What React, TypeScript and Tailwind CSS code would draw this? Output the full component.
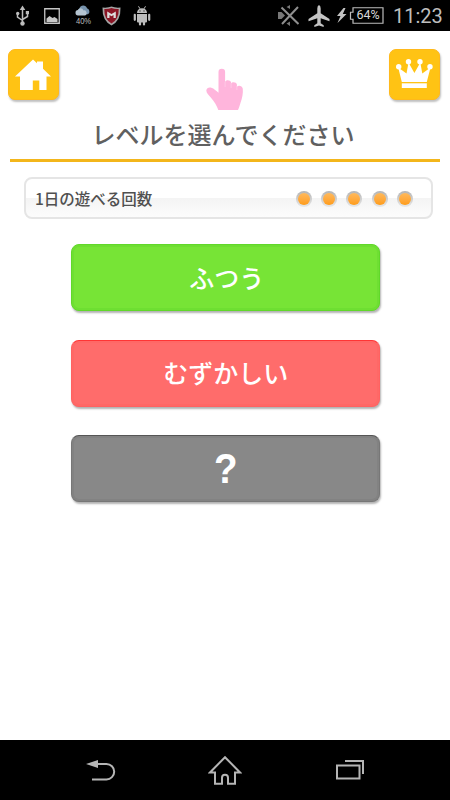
import React from 'react';

const jp = "font-['Noto_Sans_CJK_JP',sans-serif]";

function StatusBar() {
  return (
    <header className="flex h-[31px] shrink-0 items-start bg-black text-[#c4c4c4]">
      <svg className="ml-[15px] mt-[5px] h-[22px] w-[15px] shrink-0" viewBox="0 0 15 22" fill="none" stroke="#bdbdbd" strokeWidth="1.5">
        <path d="M7.5 4v14M2.5 9.5v2.5l5 3.5M12.500 8v3.500l-5 3" />
        <path d="M7.500 0.500l2.800 4.500h-5.600z" fill="#bdbdbd" stroke="none" />
        <circle cx="7.500" cy="18.500" r="2.200" fill="#bdbdbd" stroke="none" />
        <circle cx="2.700" cy="8.500" r="1.700" fill="#bdbdbd" stroke="none" />
        <path d="M10.800 6h3.200v3.200h-3.200z" fill="#bdbdbd" stroke="none" />
      </svg>
      <svg className="ml-[14px] mt-[8px] h-4 w-4 shrink-0" viewBox="0 0 16 16" fill="none">
        <path d="M.75.75h14.500v14.500H.750z" stroke="#c6c6c6" strokeWidth="1.300" />
        <path d="M2.500 14v-3.500l3-2.500 3 2 2-1 3 2v3z" fill="#c6c6c6" />
      </svg>
      <div className="ml-[14px] mt-[5px] flex w-[18px] shrink-0 flex-col items-center">
        <svg className="h-[11px] w-[16px]" viewBox="0 0 16 10" preserveAspectRatio="none">
          <path d="M5 8.500a3 3 0 0 1-.500-5.500A4 4 0 0 1 12 3a3 3 0 0 1 1 5.500z" fill="#7793ad" />
          <path d="M3 9.500a2.500 2.500 0 0 1 0-5 3 3 0 0 1 5.500.500A2.300 2.300 0 0 1 10 9.500z" fill="#b5c4d0" />
        </svg>
        <span className="scale-x-80 font-['Liberation_Sans',sans-serif] text-[9.500px] leading-[9px] text-[#bbb]">40%</span>
      </div>
      <svg className="ml-[10px] mt-[6px] h-[20px] w-[19px] shrink-0" viewBox="0 0 19 20">
        <path d="M.500 1.500Q6 2 9.500.500q3.500 1.500 9 1Q19 14.500 9.500 19.500 0 14.500.500 1.500z" fill="#a5a5a5" />
        <path d="M2.300 3q4 .300 7.200-1 3.200 1.300 7.200 1Q17 13.200 9.500 17.500 2 13.200 2.300 3z" fill="#8b1525" />
        <path d="M5.200 12V5.500l4.300 2.400 4.300-2.400V12h-2.300V9l-2 1.200-2-1.200v3z" fill="#ddd" />
      </svg>
      <svg className="ml-[12px] mt-[5px] h-[22px] w-[18px] shrink-0" viewBox="0 0 18 22" fill="#bdbdbd">
        <path d="M4 8a5 4.800 0 0 1 10 0zM4 9h10v7.500a1 1 0 0 1-1 1H5a1 1 0 0 1-1-1z" />
        <path d="M5.500 1.300l1.500 2.500M12.500 1.300l-1.500 2.500" stroke="#bdbdbd" strokeWidth="1" />
        <path d="M1.800 9.800v5M16.200 9.800v5M7 16.500v3M11 16.500v3" stroke="#bdbdbd" strokeWidth="2.200" strokeLinecap="round" />
        <path d="M6.500 5.500h1v1h-1zM10.500 5.500h1v1h-1z" fill="#000" />
      </svg>
      <svg className="ml-[126px] mt-[5px] h-[21px] w-[22px] shrink-0" viewBox="0 0 22 21">
        <path d="M1 7h3.500l3.500 3.500L4.500 14H1z" fill="#777" />
        <path d="M9.500 2L13 0v4zM9.500 18.500l3.500-2v4.500z" fill="#777" />
        <path d="M4.500 2.500l17 16.500M21 2L5 19" stroke="#8f8f8f" strokeWidth="2" />
      </svg>
      <svg className="ml-[9px] mt-[5px] h-[22px] w-[22px] shrink-0" viewBox="0 0 22 22" fill="#c4c4c4">
        <path d="M11 0q1.700.800 1.700 3.500v4.800L21.500 14v2.300l-8.800-3v5l3 2V22L11 20.600 6.300 22v-1.700l3-2v-5l-8.800 3V14l8.800-5.700V3.500Q9.300.800 11 0z" />
      </svg>
      <svg className="ml-[6px] mt-[8px] h-[15px] w-[11px] shrink-0" viewBox="0 0 11 15" fill="#c4c4c4">
        <path d="M7.500 0L1 8h3.500L1.500 15 10.500 6H6.800L9.500 0z" />
      </svg>
      <div className="relative ml-[2px] mt-[7px] flex h-[17px] w-[35px] shrink-0 items-center justify-center pl-[3px]">
        <svg className="absolute inset-0 h-full w-full" viewBox="0 0 35 17" fill="none">
          <path d="M4 .750h30v15.500H4v-4H1.500v-7H4z" stroke="#bdbdbd" strokeWidth="1.200" />
        </svg>
        <span className="font-[Roboto,sans-serif] text-[12.500px] leading-none text-[#d8d8d8]">64%</span>
      </div>
      <span className="ml-[9px] mt-[5px] whitespace-nowrap font-[Roboto,sans-serif] text-[20px] leading-[23px] text-[#bebebe]">11:23</span>
    </header>
  );
}

const tile = 'flex h-[51px] w-[51px] items-center justify-center rounded-[7px] border border-[#ffb91b] bg-[#ffc314] shadow-[1px_2px_2px_rgba(0,0,0,0.25)]';

function HomeButton() {
  return (
    <button className={tile} aria-label="ホーム">
      <svg className="h-[51px] w-[51px] shrink-0" viewBox="0 0 51 51" fill="#fff">
        <path d="M7 27.500L25 10.500l4 3.800v-1.800h6v7.300l8 7.700h-4.500v13.500h-7.200v-9.500h-6.500v9.500H12V27.500z" />
      </svg>
    </button>
  );
}

function CrownButton() {
  return (
    <button className={tile} aria-label="ランキング">
      <svg className="h-[51px] w-[51px] shrink-0" viewBox="0 0 51 51" fill="#fff">
        <circle cx="9.700" cy="17.700" r="2.700" />
        <circle cx="19.500" cy="12.700" r="2.700" />
        <circle cx="31" cy="12.700" r="2.700" />
        <circle cx="41" cy="17.700" r="2.700" />
        <path d="M9.200 18.500l8.300 6 2-11 5.900 10.500L31.300 13.500l2 11 8.200-6-3.700 14.500h-25z" />
        <path d="M12.800 34.300h25V39h-25z" />
      </svg>
    </button>
  );
}

function Pointer() {
  return (
    <svg className="ml-[2px] mt-[19px] h-[43px] w-[38px]" viewBox="0 0 38 43" fill="#ffb5dc">
      <path d="M12.500 4a3.300 3.300 0 0 1 6.600 0v10.200c.500-2.600 5.500-2.400 6 .400v1c.800-2.200 5.400-1.800 5.800 1v2.200c1.500-1.800 5.400-1 5.900 1.900.400 4.800-.600 9.500-2.200 13.800-1 3-1.400 5.300-2.600 7.500H12.300C11 38 8.300 33.500 5 29.800 2.500 27 .500 25.200.300 22.500c.300-2.600 2.600-3.500 5-2.800 2.700.800 5 3.200 7.200 5z" />
      <path d="M19.100 14v5M25.100 15v5M30.900 18v4" stroke="#ffd0e9" strokeWidth=".7" />
    </svg>
  );
}

function PlayCount() {
  return (
    <section className="ml-[24px] mt-[15px] flex h-[42px] w-[409px] shrink-0 items-center justify-between rounded-[8px] border-2 border-[#e5e5e5] bg-[linear-gradient(#fff_0%,#fff_50%,#f4f4f4_51%,#fcfcfc_100%)] pl-[9px] pr-[18px]">
      <span className={`${jp} text-[15.500px] font-medium leading-5 text-[#505050]`}>1日の遊べる回数</span>
      <div className="flex gap-[9.300px] pt-px">
        {[0, 1, 2, 3, 4].map((n) => (
          <span key={n} className="flex h-4 w-4 items-center justify-center rounded-full bg-gradient-to-b from-[#b4b4b4] to-[#e8e8e8]">
            <span className="h-3 w-3 rounded-full bg-gradient-to-b from-[#ffb95a] to-[#ff9c14]" />
          </span>
        ))}
      </div>
    </section>
  );
}

const level = `${jp} flex h-[67px] w-[309px] items-center justify-center rounded-[8px] border text-[25px] font-medium leading-none text-white`;

export default function App() {
  return (
    <div className="flex h-[800px] w-[450px] flex-col overflow-hidden bg-white">
      <StatusBar />
      <main className="flex min-h-0 flex-1 flex-col">
        <div className="flex h-[80px] shrink-0 items-start justify-between pl-[8px] pr-[10px] pt-[18px]">
          <HomeButton />
          <Pointer />
          <CrownButton />
        </div>
        <h1 className={`${jp} ml-[10px] h-[51px] w-[430px] shrink-0 border-b-[3px] border-[#f3b61b] pr-[4px] pt-[7px] text-center text-[24px] font-medium leading-[32px] text-[#606060]`}>レベルを選んでください</h1>
        <PlayCount />
        <div className="ml-[71.300px] mt-[25px] flex flex-col gap-[28.500px]">
          <button className={`${level} border-[#61d82a] bg-[#77e436] pl-[2px] shadow-[inset_0_0_0_2px_#6edf32,1px_2px_2px_rgba(0,0,0,0.3)]`}>ふつう</button>
          <button className={`${level} border-[#ff6262] border-t-[#ff3535] bg-[#ff6c6b] pb-px shadow-[inset_0_0_0_2px_#ff6866,1px_2px_2px_rgba(0,0,0,0.3)]`}>むずかしい</button>
          <button className={`${level} border-[#777] border-t-[#555] bg-[#888] shadow-[inset_0_0_0_2px_#828282,1px_2px_2px_rgba(0,0,0,0.3)]`}>
            <span className="scale-x-92 font-['Liberation_Sans',sans-serif] text-[42px] font-bold">?</span>
          </button>
        </div>
      </main>
      <nav className="flex h-[60px] shrink-0 items-start bg-black">
        <svg className="ml-[86px] mt-[19px] h-[23px] w-[30px]" viewBox="0 0 30 23" fill="none">
          <path d="M10 5h10.500a7.700 7.700 0 0 1 0 15.400H6" stroke="#b5b5b5" strokeWidth="2" />
          <path d="M0 5l12-4v8z" fill="#b5b5b5" />
        </svg>
        <svg className="ml-[92px] mt-[15px] h-[31px] w-[34px]" viewBox="0 0 34 31" fill="none">
          <path d="M17 2.200L2 17.500h5v11.300h7v-6a3 3 0 0 1 6 0v6h7V17.500h5z" stroke="#b5b5b5" strokeWidth="2" />
        </svg>
        <svg className="ml-[93px] mt-[19px] h-[22px] w-[30px]" viewBox="0 0 30 22" fill="none">
          <path d="M2 6.500h22.500v13H2zM10 2h18v13" stroke="#b5b5b5" strokeWidth="2" />
        </svg>
      </nav>
    </div>
  );
}
